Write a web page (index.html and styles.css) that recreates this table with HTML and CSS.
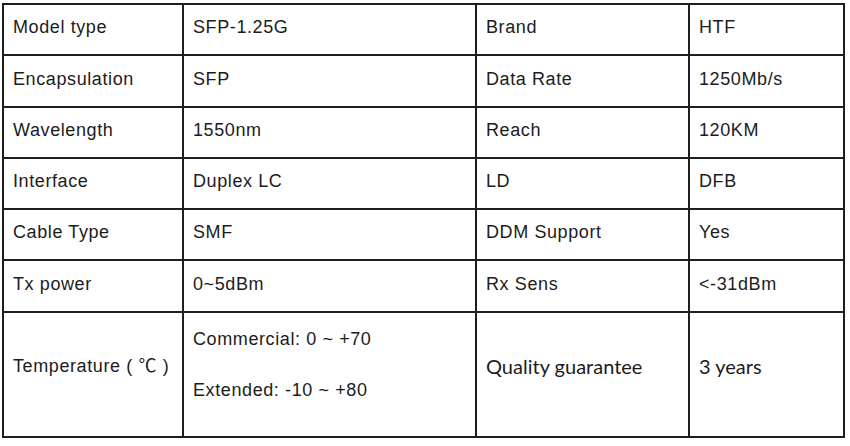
FILE: index.html
```html
<!DOCTYPE html>
<html>
<head>
<meta charset="utf-8">
<link rel="stylesheet" href="styles.css">
</head>
<body>
<table class="spec">
  <colgroup>
    <col class="c1"><col class="c2"><col class="c3"><col class="c4">
  </colgroup>
  <tr class="r"><td>Model type</td><td>SFP-1.25G</td><td>Brand</td><td>HTF</td></tr>
  <tr class="r r2"><td>Encapsulation</td><td>SFP</td><td>Data Rate</td><td>1250Mb/s</td></tr>
  <tr class="r"><td>Wavelength</td><td>1550nm</td><td>Reach</td><td>120KM</td></tr>
  <tr class="r"><td>Interface</td><td>Duplex LC</td><td>LD</td><td>DFB</td></tr>
  <tr class="r"><td>Cable Type</td><td>SMF</td><td>DDM Support</td><td>Yes</td></tr>
  <tr class="r r2"><td>Tx power</td><td>0~5dBm</td><td>Rx Sens</td><td>&lt;-31dBm</td></tr>
  <tr class="temp">
    <td class="mid">Temperature ( ℃ )</td>
    <td class="multi"><div class="line">Commercial: 0 ~ +70</div><div class="line second">Extended: -10 ~ +80</div></td>
    <td class="mid cal">Quality guarantee</td>
    <td class="mid cal">3 years</td>
  </tr>
</table>
</body>
</html>
```
FILE: styles.css
```css
html, body {
  margin: 0;
  padding: 0;
  background: #ffffff;
}
body {
  padding: 3px 0 0 2px;
  font-family: "Liberation Sans", Arial, "Noto Sans CJK SC", sans-serif;
  color: #1c1c1c;
}
.spec {
  border-collapse: collapse;
  table-layout: fixed;
  width: 841px;
}
.c1 { width: 180px; }
.c2 { width: 293px; }
.c3 { width: 213px; }
.c4 { width: 155px; }
.spec td {
  border: 2px solid #1e1e1e;
  padding: 0 0 5px 9px;
  font-size: 18px;
  letter-spacing: 0.6px;
  line-height: 22px;
  vertical-align: middle;
  white-space: nowrap;
}
.r td { height: 44px; }
.r2 td { height: 45px; }
.temp td { height: 105px; }
.spec td.mid { padding-bottom: 18px; }
.spec td.multi {
  vertical-align: top;
  padding-top: 15px;
  padding-bottom: 0;
}
.second { margin-top: 29px; }
.spec td.cal {
  font-family: Lato, "Liberation Sans", sans-serif;
  font-size: 20px;
  letter-spacing: 0;
}
```
